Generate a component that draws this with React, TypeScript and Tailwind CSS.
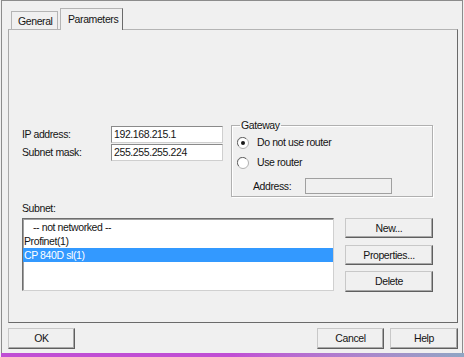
import clsx from "clsx";

function Radio({ checked }: { checked?: boolean }) {
  return (
    <svg width="12" height="12" viewBox="0 0 12 12" className="shrink-0">
      <circle cx="6" cy="6" r="5.5" fill="#fff" stroke="#b0b0b0" />
      <path d="M1.8 9 A5 5 0 0 1 9 1.8" stroke="#6e6e6e" fill="none" />
      {checked && <circle cx="6" cy="6" r="2" fill="#1a1a1a" />}
    </svg>
  );
}

function Btn({ children, className }: { children: React.ReactNode; className?: string }) {
  return (
    <button
      className={clsx(
        "flex items-center justify-center bg-[#f0f0f0] border border-t-[#c8c8c8] border-l-[#c8c8c8] border-r-[#5f5f5f] border-b-[#5f5f5f] shadow-[inset_-1px_-1px_0_#a8a8a8]",
        className
      )}
    >
      {children}
    </button>
  );
}

function Field({ label, value }: { label: string; value: string }) {
  return (
    <div className="flex items-center h-[17px]">
      <span className="w-[89px]">{label}</span>
      <div className="w-[112px] h-[17px] bg-white border border-t-[#8a8a8a] border-l-[#8a8a8a] border-r-[#cfcfcf] border-b-[#cfcfcf] flex items-center pl-[2px]">
        {value}
      </div>
    </div>
  );
}

export default function App() {
  return (
    <div className="w-[464px] h-[357px] bg-[#f0f0f0] pl-[1px] flex flex-col text-[10.5px] tracking-[-0.4px] leading-[13px] text-[#141414] font-['Liberation_Sans',Arial,sans-serif]">
      <div className="w-[462px] h-[353px] border-l border-t border-r border-[#8c8c8c] flex flex-col pl-[6px]">
        {/* tabs */}
        <div className="h-[28px] flex items-end pl-[3px]">
          <div className="w-[47px] h-[18px] border border-b-0 border-[#b4b4b4] flex items-center pl-[6px] pt-[2px]">
            General
          </div>
          <div className="relative z-10 ml-[2px] w-[63px] h-[22px] -mb-px bg-[#f0f0f0] border border-b-0 border-[#b4b4b4] border-r-[#6a6a6a] flex items-center pl-[7px]">
            Parameters
          </div>
        </div>

        {/* panel */}
        <div className="w-[450px] h-[294px] border border-t-[#b4b4b4] border-l-[#a8a8a8] border-r-[#6a6a6a] border-b-[#6a6a6a] pl-[13px] pt-[89px] flex flex-col">
          <div className="flex items-start">
            <div className="mt-[7px] flex flex-col gap-[1px]">
              <Field label="IP address:" value="192.168.215.1" />
              <Field label="Subnet mask:" value="255.255.255.224" />
            </div>
            <fieldset className="ml-[8px] w-[202px] h-[78px] border border-[#b0b0b0] shadow-[inset_1px_1px_0_#fff,1px_1px_0_#fff]">
              <legend className="ml-[8px] px-[1px]">Gateway</legend>
              <div className="pl-[5px] mt-[4px] flex items-center h-[13px]">
                <Radio checked />
                <span className="ml-[8px]">Do not use router</span>
              </div>
              <div className="pl-[5px] mt-[7px] flex items-center h-[13px]">
                <Radio />
                <span className="ml-[8px]">Use router</span>
              </div>
              <div className="pl-[21px] mt-[9px] flex items-center h-[16px]">
                <span className="w-[52px]">Address:</span>
                <div className="w-[87px] h-[16px] bg-[#f0f0f0] border border-[#a0a0a0]" />
              </div>
            </fieldset>
          </div>

          <div className="mt-[5px] h-[13px]">Subnet:</div>

          <div className="mt-[3px] flex items-start">
            <div className="w-[312px] h-[73px] bg-white border border-t-[#6e6e6e] border-l-[#6e6e6e] border-r-[#d0d0d0] border-b-[#d0d0d0] shadow-[inset_1px_1px_0_#a0a0a0] pt-[1px] flex flex-col">
              <div className="h-[14px] leading-[14px] pl-[10px]">-- not networked --</div>
              <div className="h-[14px] leading-[14px] pl-[1px]">Profinet(1)</div>
              <div className="h-[14px] leading-[14px] pl-[1px] bg-[#3399ff] text-white">CP 840D sl(1)</div>
            </div>
            <div className="ml-[11px] flex flex-col">
              <Btn className="w-[88px] h-[20px]">New...</Btn>
              <Btn className="w-[88px] h-[20px] mt-[7px]">Properties...</Btn>
              <Btn className="w-[88px] h-[21px] mt-[6px]">Delete</Btn>
            </div>
          </div>
        </div>

        {/* dialog buttons */}
        <div className="w-[450px] mt-[5px] flex items-center">
          <Btn className="w-[67px] h-[21px]">OK</Btn>
          <div className="flex-1" />
          <Btn className="w-[67px] h-[21px]">Cancel</Btn>
          <Btn className="w-[68px] h-[21px] ml-[6px]">Help</Btn>
        </div>
      </div>
      <div className="h-[4px] bg-gradient-to-r from-[#c04ed4] via-[#c04ed4] to-[#8fa6c4]" />
    </div>
  );
}
